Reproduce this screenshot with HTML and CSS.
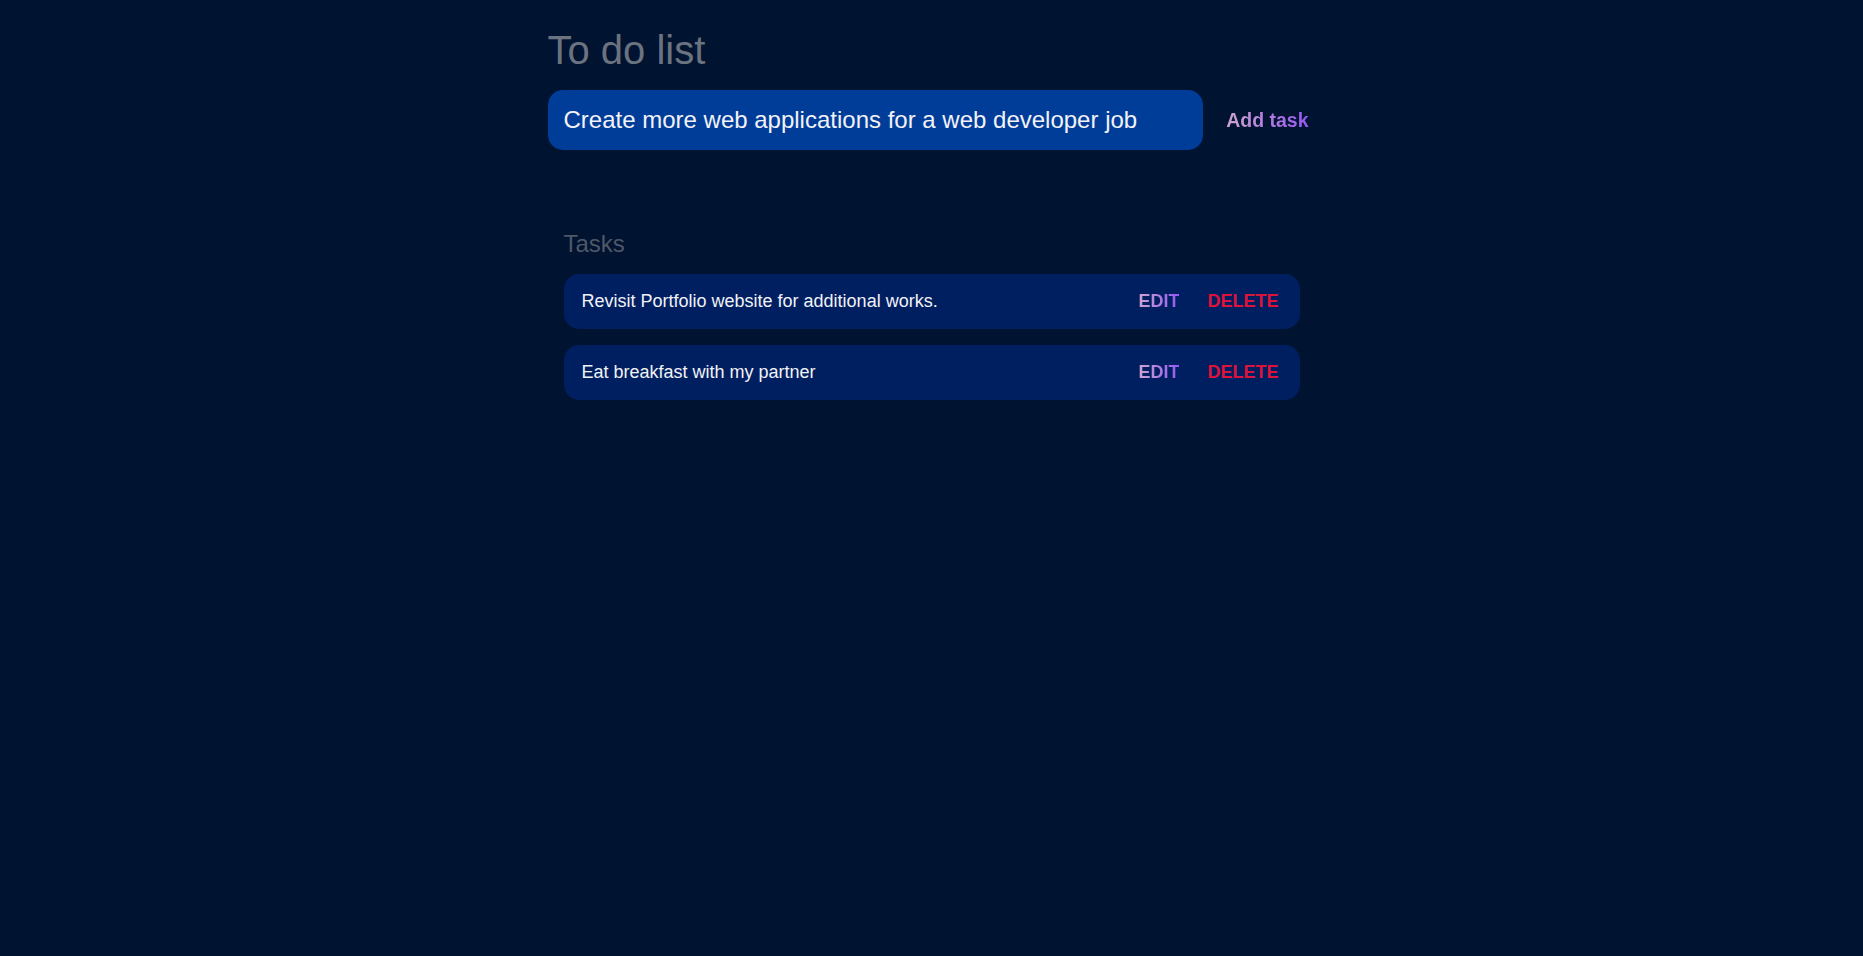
FILE: index.html
```html
<!DOCTYPE html>
<html lang="en">
<head>
<meta charset="utf-8">
<title>To do list</title>
<link rel="stylesheet" href="styles.css">
</head>
<body>
<main class="app">
  <h1 class="title">To do list</h1>
  <form class="new-task">
    <input class="new-task-input" type="text" value="Create more web applications for a web developer job">
    <button class="add-btn" type="button"><span class="grad-text">Add task</span></button>
  </form>
  <section class="tasks">
    <h2 class="tasks-heading">Tasks</h2>
    <div class="task-list">
      <div class="task">
        <span class="task-text">Revisit Portfolio website for additional works.</span>
        <div class="task-actions">
          <button class="edit-btn" type="button"><span class="grad-text">EDIT</span></button>
          <button class="delete-btn" type="button">DELETE</button>
        </div>
      </div>
      <div class="task">
        <span class="task-text">Eat breakfast with my partner</span>
        <div class="task-actions">
          <button class="edit-btn" type="button"><span class="grad-text">EDIT</span></button>
          <button class="delete-btn" type="button">DELETE</button>
        </div>
      </div>
    </div>
  </section>
</main>
</body>
</html>
```

FILE: styles.css
```css
* {
  box-sizing: border-box;
}

html, body {
  margin: 0;
  padding: 0;
  height: 100%;
}

body {
  background: #001330;
  font-family: "Liberation Sans", Arial, sans-serif;
  color: #eef0f5;
}

.app {
  max-width: 768px;
  margin: 0 auto;
  padding-top: 27px;
}

.title {
  margin: 0;
  font-size: 40px;
  font-weight: 400;
  line-height: 46px;
  color: #6b7280;
}

.new-task {
  display: flex;
  align-items: center;
  gap: 16px;
  margin-top: 17px;
}

.new-task-input {
  flex: 1;
  height: 60px;
  padding: 0 16px;
  border: none;
  outline: none;
  border-radius: 15px;
  background: #003d99;
  color: #f2f2f7;
  font-family: "Liberation Sans", Arial, sans-serif;
  font-size: 24px;
}

.add-btn {
  background: none;
  border: none;
  padding: 0 7px;
  font-family: "Liberation Sans", Arial, sans-serif;
  font-size: 19.5px;
  font-weight: 700;
  cursor: pointer;
}

.grad-text {
  background: linear-gradient(to right, #cda4cf, #9558f2);
  -webkit-background-clip: text;
  background-clip: text;
  color: transparent;
}

.tasks {
  margin-top: 64px;
  padding: 16px;
}

.tasks-heading {
  margin: 0 0 16px;
  font-size: 24px;
  font-weight: 400;
  line-height: 1.15;
  color: #4f5768;
}

.task-list {
  display: flex;
  flex-direction: column;
  gap: 16px;
}

.task {
  display: flex;
  align-items: center;
  justify-content: space-between;
  height: 55px;
  padding: 0 21px 0 18px;
  border-radius: 15px;
  background: #001f60;
}

.task-text {
  font-size: 18px;
  color: #f2f2f7;
}

.task-actions {
  display: flex;
  align-items: center;
  gap: 28px;
}

.edit-btn,
.delete-btn {
  background: none;
  border: none;
  padding: 0;
  font-family: "Liberation Sans", Arial, sans-serif;
  font-size: 18px;
  font-weight: 700;
  cursor: pointer;
}

.delete-btn {
  color: #dc143c;
}
```
